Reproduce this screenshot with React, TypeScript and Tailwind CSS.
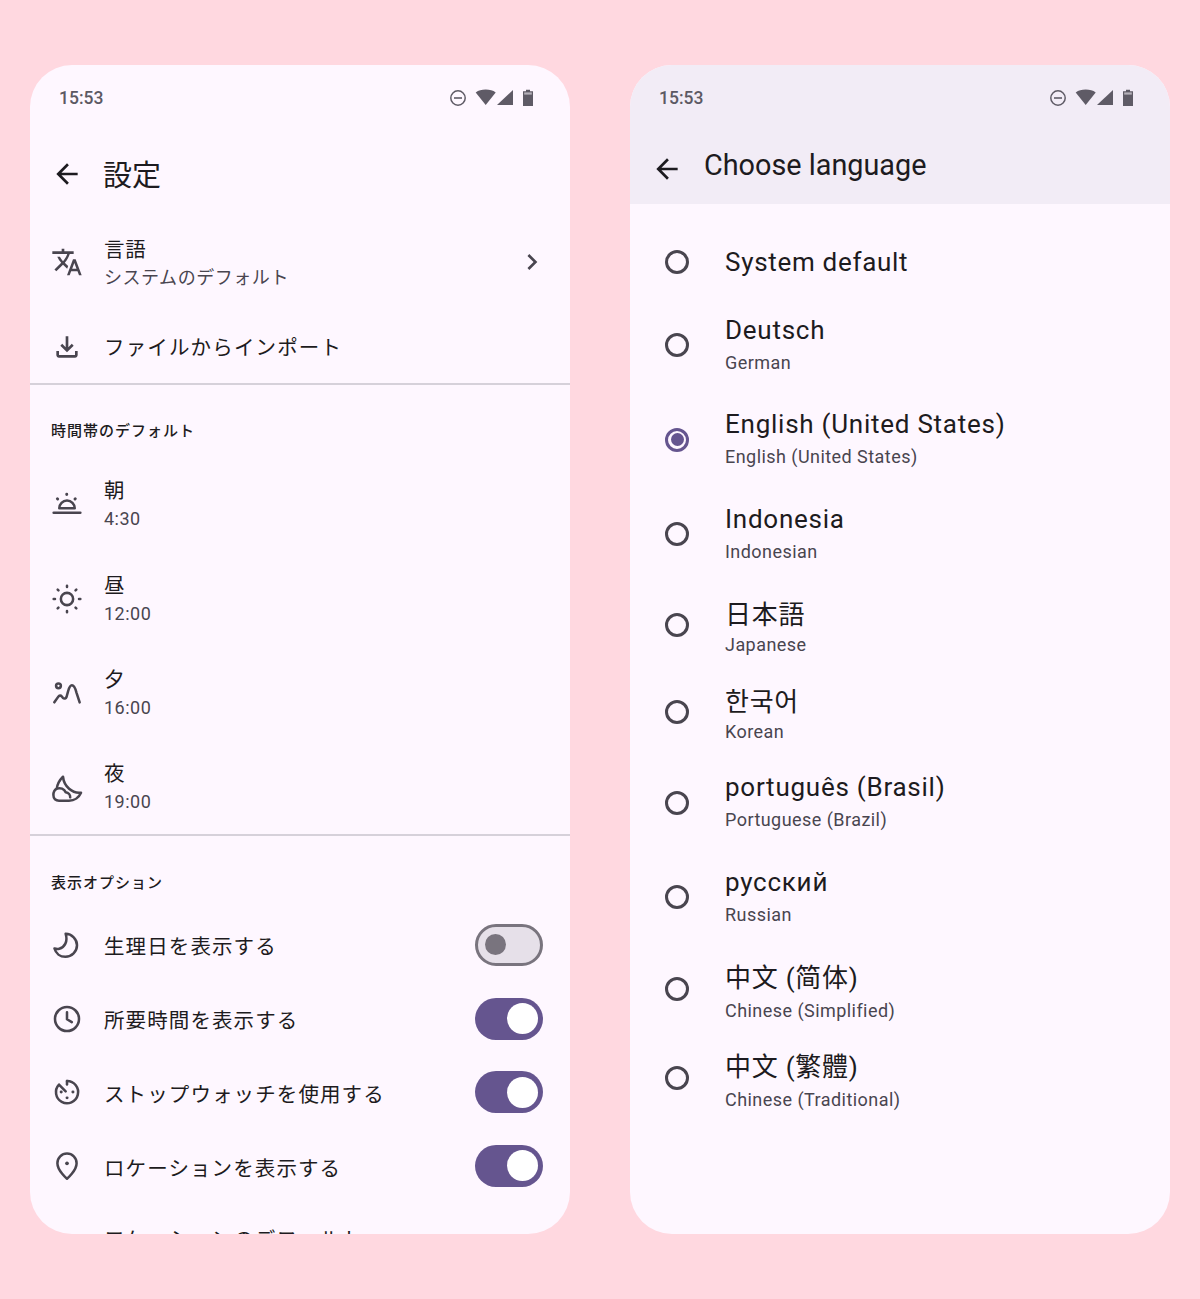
import type { ReactNode } from "react";

function Icon({ children, className = "" }: { children: ReactNode; className?: string }) {
  return (
    <svg
      viewBox="0 0 24 24"
      fill="none"
      stroke="currentColor"
      strokeWidth="1.9"
      strokeLinecap="round"
      strokeLinejoin="round"
      className={`w-8 h-8 shrink-0 text-[#49454f] ${className}`}
    >
      {children}
    </svg>
  );
}

function StatusBar() {
  return (
    <div className="h-[66px] shrink-0 pl-[29px] pr-[36px] flex items-center justify-between">
      <span className="text-[17.5px] font-medium text-[#5c5963]">15:53</span>
      <svg viewBox="0 0 86 20" className="w-[86px] h-5 text-[#5f5b66]" fill="currentColor">
        <circle cx="10" cy="10" r="7.2" fill="none" stroke="currentColor" strokeWidth="1.5" />
        <rect x="6" y="9.2" width="8" height="1.6" />
        <path d="M27.7 4.5C30.5 2.3 33.5 1.5 37.7 1.5s7.2.8 10 3L37.7 17z" />
        <path d="M49 17 65 2v15z" />
        <path d="M75 3.2h3V1.8h4v1.4h3V18H75z" />
        <rect x="76.2" y="4.4" width="7.6" height="2.2" fill="#fef7ff" opacity="0.55" />
      </svg>
    </div>
  );
}

function Back({ className = "" }: { className?: string }) {
  return (
    <svg viewBox="0 0 24 24" className={`w-8 h-8 shrink-0 text-[#1d1b20] ${className}`} fill="currentColor">
      <path d="M20 11H7.83l5.59-5.59L12 4l-8 8 8 8 1.41-1.41L7.83 13H20v-2z" />
    </svg>
  );
}

function Divider() {
  return <div className="h-[1.5px] shrink-0 bg-[#d6d1da]" />;
}

function Toggle({ on }: { on: boolean }) {
  if (!on) {
    return (
      <div className="w-[68px] h-[42px] rounded-full bg-[#e6e0e9] border-[3px] border-[#79747e] flex items-center pl-[7px]">
        <div className="w-[21px] h-[21px] rounded-full bg-[#79747e]" />
      </div>
    );
  }
  return (
    <div className="w-[68px] h-[42px] rounded-full bg-[#65558f] flex items-center justify-end pr-[5px]">
      <div className="w-[31px] h-[31px] rounded-full bg-white" />
    </div>
  );
}

const dayParts = [
  {
    label: "朝",
    time: "4:30",
    icon: (
      <>
        <path d="M2 17.8h20" />
        <path d="M6.2 14.5a5.8 5.8 0 0 1 11.6 0z" />
        <path d="M11.8 4v.2M4.8 7.3l.2.2M18.2 7.3l-.2.2" strokeWidth="2.2" />
      </>
    ),
  },
  {
    label: "昼",
    time: "12:00",
    icon: (
      <>
        <circle cx="12" cy="12" r="4.6" />
        <path d="M12 2v1M12 21v1M2 12h1M21 12h1M5 5l.6.6M18.4 18.4l.6.6M5 19l.6-.6M18.4 5.6l.6-.6" />
      </>
    ),
  },
  {
    label: "夕",
    time: "16:00",
    icon: (
      <>
        <circle cx="5.6" cy="6.6" r="1.8" />
        <path d="M2.5 19l3-4.3c.6-.9 1.9-1 2.6-.1l.8 1c1 1 2.3.6 2.8-.8l1-3.6c.7-2.5 1.2-5 3-5s2.6 2.5 3.4 5.5L21.5 19" />
      </>
    ),
  },
  {
    label: "夜",
    time: "19:00",
    icon: (
      <>
        <path d="M9 3.5C6.5 6 4.8 9 4.3 12.5 2.5 13.5 1.8 15.5 1.8 17.3c0 2.7 1.8 4.2 4.2 4.2h7.5c4 0 7.5-2.5 9-6-6.5.8-12.8-4.5-13.5-12z" />
        <path d="M4.3 12.5c2.7-1 5.7.1 6.7 2.7 2.2.3 3.5 2 3.4 3.8" />
      </>
    ),
  },
];

const options = [
  {
    label: "生理日を表示する",
    on: false,
    icon: (
      <path d="M11 3.6c4.7.2 8.5 3.9 8.5 8.6s-3.9 8.6-8.7 8.6c-4 0-7.2-2.6-8.2-6.2 1.3.5 2.6.5 3.6.2 4-1 6.6-5.5 4.8-11.2z" />
    ),
  },
  {
    label: "所要時間を表示する",
    on: true,
    icon: (
      <>
        <circle cx="12" cy="12" r="9" />
        <path d="M12 7v5.2l3.6 2.2" />
      </>
    ),
  },
  {
    label: "ストップウォッチを使用する",
    on: true,
    icon: (
      <>
        <path d="M12 3.8a8.3 8.3 0 1 1-6 2.6l5 5.1" />
        <path d="M12 3.8v2.6" />
        <path d="M7.6 12h.1M12 16.4h.1M16.4 12h.1" strokeWidth="2.2" />
      </>
    ),
  },
  {
    label: "ロケーションを表示する",
    on: true,
    icon: (
      <>
        <path d="M12 21.5s-7.2-6-7.2-11.6a7.2 7.2 0 0 1 14.4 0C19.2 15.5 12 21.5 12 21.5z" />
        <circle cx="12" cy="10" r="1.4" fill="currentColor" stroke="none" />
      </>
    ),
  },
];

function SettingsPhone() {
  return (
    <div className="w-[540px] h-[1169px] rounded-[42px] overflow-hidden bg-[#fef7ff] flex flex-col">
      <StatusBar />
      <div className="h-[88px] shrink-0 pl-[21px] flex items-center gap-[20px]">
        <Back className="-mt-[2px]" />
        <span className="text-[29px] pt-[4px] text-[#1d1b20]">設定</span>
      </div>

      <div className="h-[86px] shrink-0 pl-[21px] pr-[22px] flex items-center gap-[21px]">
        <svg viewBox="0 0 24 24" className="w-8 h-8 shrink-0 text-[#49454f]" fill="currentColor">
          <path d="M12.87 15.07l-2.54-2.51.03-.03c1.74-1.94 2.98-4.17 3.71-6.53H17V4h-7V2H8v2H1v1.99h11.17C11.5 7.92 10.44 9.75 9 11.35 8.07 10.32 7.3 9.19 6.69 8h-2c.73 1.63 1.73 3.17 2.98 4.56l-5.09 5.02L4 19l5-5 3.11 3.11.76-2.04zM18.5 10h-2L12 22h2l1.12-3h4.75L21 22h2l-4.5-12zm-2.62 7l1.62-4.33L19.12 17h-3.24z" />
        </svg>
        <div className="flex-1 pt-[4px]">
          <div className="text-[20.5px] leading-[28px] tracking-[0.7px] text-[#1d1b20]">言語</div>
          <div className="text-[18px] leading-[28px] tracking-[0.55px] text-[#49454f]">システムのデフォルト</div>
        </div>
        <svg viewBox="0 0 24 24" className="w-8 h-8 shrink-0 text-[#49454f]" fill="currentColor">
          <path d="M10 6L8.59 7.41 13.17 12l-4.58 4.59L10 18l6-6z" />
        </svg>
      </div>

      <div className="h-[78px] shrink-0 pl-[21px] pt-[5px] flex items-center gap-[21px]">
        <svg viewBox="0 0 24 24" className="w-8 h-8 shrink-0 text-[#49454f]" fill="currentColor">
          <path d="M18 15v3H6v-3H4v3c0 1.1.9 2 2 2h12c1.1 0 2-.9 2-2v-3h-2zm-1-4l-1.41-1.41L13 12.17V4h-2v8.17L8.41 9.59 7 11l5 5 5-5z" />
        </svg>
        <span className="text-[20.5px] pt-[4px] tracking-[1.15px] text-[#1d1b20]">ファイルからインポート</span>
      </div>
      <Divider />

      <div className="h-[73px] shrink-0 pl-[21px] pt-[35px] text-[15px] leading-[22px] tracking-[1px] font-medium text-[#1d1b20]">
        時間帯のデフォルト
      </div>
      <div className="h-[376.5px] shrink-0">
        {dayParts.map((p) => (
          <div key={p.label} className="h-[94.4px] pl-[21px] flex items-center gap-[21px]">
            <Icon>{p.icon}</Icon>
            <div className="pt-[1px]">
              <div className="text-[20.5px] leading-[28px] text-[#1d1b20]">{p.label}</div>
              <div className="text-[18px] leading-[28px] tracking-[0.5px] text-[#49454f]">{p.time}</div>
            </div>
          </div>
        ))}
      </div>
      <Divider />

      <div className="h-[72.5px] shrink-0 pl-[21px] pt-[36.5px] text-[15px] leading-[22px] tracking-[1px] font-medium text-[#1d1b20]">
        表示オプション
      </div>
      {options.map((o) => (
        <div key={o.label} className="h-[73.7px] shrink-0 pl-[21px] pr-[27px] flex items-center gap-[21px]">
          <Icon>{o.icon}</Icon>
          <span className="flex-1 text-[20.5px] pt-[6px] tracking-[1.1px] text-[#1d1b20]">{o.label}</span>
          <Toggle on={o.on} />
        </div>
      ))}
      <div className="h-[73.7px] shrink-0 pl-[74px] pt-[2px] flex items-center">
        <span className="text-[20.5px] tracking-[1.1px] text-[#1d1b20]">ロケーションのデフォルト</span>
      </div>
    </div>
  );
}

const languages = [
  { name: "Deutsch", sub: "German", rowClass: "h-[94.5px]", titleClass: "leading-[34px]" },
  {
    name: "English (United States)",
    sub: "English (United States)",
    rowClass: "h-[94.5px]",
    titleClass: "leading-[34px]",
    selected: true,
  },
  { name: "Indonesia", sub: "Indonesian", rowClass: "h-[94.5px]", titleClass: "leading-[34px]" },
  {
    name: "日本語",
    sub: "Japanese",
    rowClass: "h-[87px]",
    titleClass: "pt-[10px] leading-[28px] font-['Roboto','Noto_Sans_CJK_JP',sans-serif]",
  },
  {
    name: "한국어",
    sub: "Korean",
    rowClass: "h-[87px]",
    titleClass: "pt-[10px] leading-[28px] font-['Roboto','Noto_Sans_CJK_KR',sans-serif]",
  },
  { name: "português (Brasil)", sub: "Portuguese (Brazil)", rowClass: "h-[94.5px]", titleClass: "leading-[34px]" },
  { name: "русский", sub: "Russian", rowClass: "h-[94.5px]", titleClass: "leading-[34px]" },
  {
    name: "中文 (简体)",
    sub: "Chinese (Simplified)",
    rowClass: "h-[89px]",
    titleClass: "pt-[8px] leading-[34px] font-['Roboto','Noto_Sans_CJK_SC',sans-serif]",
  },
  {
    name: "中文 (繁體)",
    sub: "Chinese (Traditional)",
    rowClass: "h-[89px]",
    titleClass: "pt-[8px] leading-[34px] font-['Roboto','Noto_Sans_CJK_TC',sans-serif]",
  },
];

function Radio({ selected = false }: { selected?: boolean }) {
  if (selected) {
    return (
      <div className="w-[24px] h-[24px] shrink-0 rounded-full border-[3px] border-[#65558f] flex items-center justify-center">
        <div className="w-[13px] h-[13px] rounded-full bg-[#65558f]" />
      </div>
    );
  }
  return <div className="w-[24px] h-[24px] shrink-0 rounded-full border-[3px] border-[#49454f]" />;
}

function LanguagePhone() {
  return (
    <div className="w-[540px] h-[1169px] rounded-[42px] overflow-hidden bg-[#fef7ff] flex flex-col">
      <div className="bg-[#f2ecf6] h-[139px] shrink-0 flex flex-col">
        <StatusBar />
        <div className="pl-[21px] pt-[14px] flex items-center gap-[21px]">
          <Back className="mt-[8px]" />
          <span className="text-[28.8px] leading-[40px] text-[#1d1b20]">Choose language</span>
        </div>
      </div>
      <div className="pt-[22px] flex flex-col">
        <div className="h-[72px] pl-[35px] flex items-center gap-[36px]">
          <Radio />
          <span className="text-[26px] tracking-[0.7px] text-[#1d1b20]">System default</span>
        </div>
        {languages.map((l) => (
          <div key={l.name} className={`${l.rowClass} pl-[35px] flex items-center gap-[36px]`}>
            <Radio selected={l.selected} />
            <div className="mb-[1px]">
              <div className={`${l.titleClass} text-[26px] tracking-[0.75px] text-[#1d1b20]`}>{l.name}</div>
              <div className="mt-[2px] text-[18px] leading-[28px] tracking-[0.45px] text-[#49454f]">{l.sub}</div>
            </div>
          </div>
        ))}
      </div>
    </div>
  );
}

export default function App() {
  return (
    <div className="w-[1200px] h-[1299px] bg-[#ffd8e0] pt-[65px] px-[30px] flex gap-[60px] font-['Roboto','Noto_Sans_CJK_JP',sans-serif]">
      <SettingsPhone />
      <LanguagePhone />
    </div>
  );
}
